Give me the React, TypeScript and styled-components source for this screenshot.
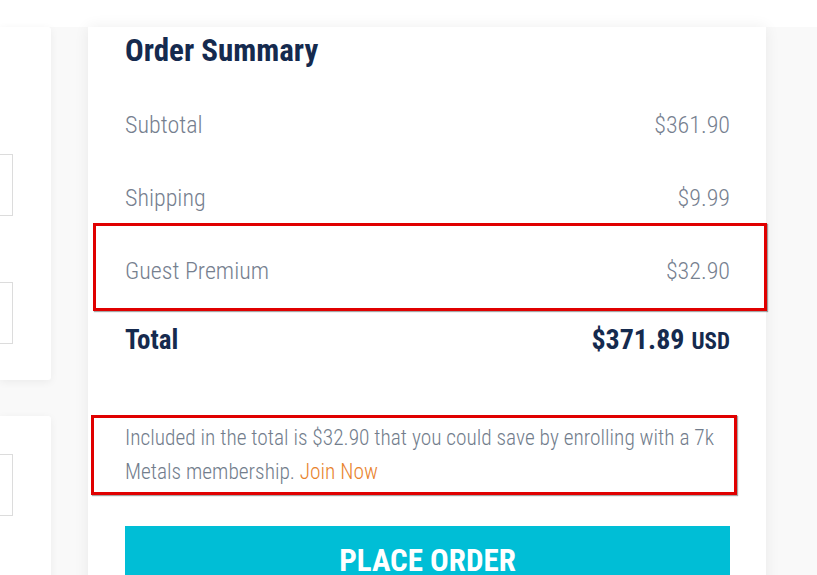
import React from "react";
import styled, { createGlobalStyle } from "styled-components";

const Global = createGlobalStyle`
  html, body { margin: 0; padding: 0; background: #ffffff; }
  body { font-family: "Roboto Condensed", "Roboto", sans-serif; overflow: hidden; }
  * { box-sizing: border-box; }
`;

const Page = styled.div`
  width: 817px;
  height: 575px;
  overflow: hidden;
  display: flex;
  flex-direction: column;
  background: #ffffff;
`;

const TopBand = styled.div`
  height: 27px;
  flex: none;
  background: #ffffff;
`;

const Main = styled.div`
  flex: 1;
  display: grid;
  grid-template-columns: 51px 678px;
  column-gap: 37px;
  align-items: start;
  background: #f9f9f9;
`;

const LeftColumn = styled.div`
  display: flex;
  flex-direction: column;
  gap: 36px;
`;

const SideCard = styled.div<{ $height: number; $padTop: number; $gap: number }>`
  height: ${(p) => p.$height}px;
  background: #ffffff;
  box-shadow: 0 2px 8px rgba(0, 0, 0, 0.06);
  border-radius: 0 3px 3px 0;
  padding: ${(p) => p.$padTop}px 38px 0 0;
  display: flex;
  flex-direction: column;
  gap: ${(p) => p.$gap}px;
`;

const Field = styled.div`
  height: 62px;
  flex: none;
  margin-left: -2px;
  border: 1px solid #dcdcdc;
  background: #ffffff;
`;

const SummaryCard = styled.section`
  min-height: 620px;
  background: #ffffff;
  box-shadow: 0 0 14px rgba(0, 0, 0, 0.07);
  padding: 4px 36px 0 37px;
  display: flex;
  flex-direction: column;

  & > * {
    flex-shrink: 0;
  }
`;

const Title = styled.h2`
  margin: 0 0 17px;
  font-family: "Roboto Condensed", "Roboto", sans-serif;
  font-weight: 700;
  font-size: 31px;
  line-height: 40px;
  color: #152a4e;
`;

const LineRow = styled.div`
  position: relative;
  height: 73px;
  display: flex;
  align-items: center;
  justify-content: space-between;
  font-size: 24px;
  font-weight: 300;
  color: #76808f;
`;

const TotalRow = styled.div`
  height: 65px;
  display: flex;
  align-items: center;
  justify-content: space-between;
  font-size: 27px;
  font-weight: 700;
  color: #152a4e;
`;

const Amount = styled.span`
  display: inline-flex;
  align-items: baseline;
  gap: 7px;
  font-size: 28px;
`;

const Currency = styled.span`
  font-size: 23px;
  font-weight: 700;
`;

const Highlight = styled.div<{ $t: number; $r: number; $b: number; $l: number }>`
  position: absolute;
  top: ${(p) => p.$t}px;
  right: ${(p) => p.$r}px;
  bottom: ${(p) => p.$b}px;
  left: ${(p) => p.$l}px;
  border: 3px solid #e00000;
  box-shadow: 1px 1px 1px rgba(0, 0, 0, 0.35);
  pointer-events: none;
`;

const Note = styled.p`
  position: relative;
  margin: 49px 0 0;
  font-size: 21.4px;
  font-weight: 300;
  line-height: 34px;
  color: #727d8c;
`;

const JoinLink = styled.a`
  color: #e8822c;
  text-decoration: none;
`;

const PlaceOrder = styled.button`
  margin-top: 37px;
  height: 76px;
  width: 100%;
  border: none;
  background: #00bed6;
  color: #ffffff;
  font-family: "Roboto Condensed", "Roboto", sans-serif;
  font-weight: 700;
  font-size: 31px;
  text-transform: uppercase;
  display: flex;
  justify-content: center;
  align-items: flex-start;
  padding: 16px 0 0;
`;

export default function App() {
  return (
    <Page>
      <Global />
      <TopBand />
      <Main>
        <LeftColumn>
          <SideCard $height={353} $padTop={127} $gap={66}>
            <Field />
            <Field />
          </SideCard>
          <SideCard $height={200} $padTop={38} $gap={0}>
            <Field />
          </SideCard>
        </LeftColumn>
        <SummaryCard>
          <Title>Order Summary</Title>
          <LineRow>
            <span>Subtotal</span>
            <span>$361.90</span>
          </LineRow>
          <LineRow>
            <span>Shipping</span>
            <span>$9.99</span>
          </LineRow>
          <LineRow>
            <span>Guest Premium</span>
            <span>$32.90</span>
            <Highlight $t={-11} $r={-37} $b={-4} $l={-32} />
          </LineRow>
          <TotalRow>
            <span>Total</span>
            <Amount>
              $371.89 <Currency>USD</Currency>
            </Amount>
          </TotalRow>
          <Note>
            Included in the total is $32.90 that you could save by enrolling with a 7k
            Metals membership. <JoinLink href="#">Join Now</JoinLink>
            <Highlight $t={-6} $r={-7} $b={-6} $l={-34} />
          </Note>
          <PlaceOrder>Place Order</PlaceOrder>
        </SummaryCard>
      </Main>
    </Page>
  );
}
